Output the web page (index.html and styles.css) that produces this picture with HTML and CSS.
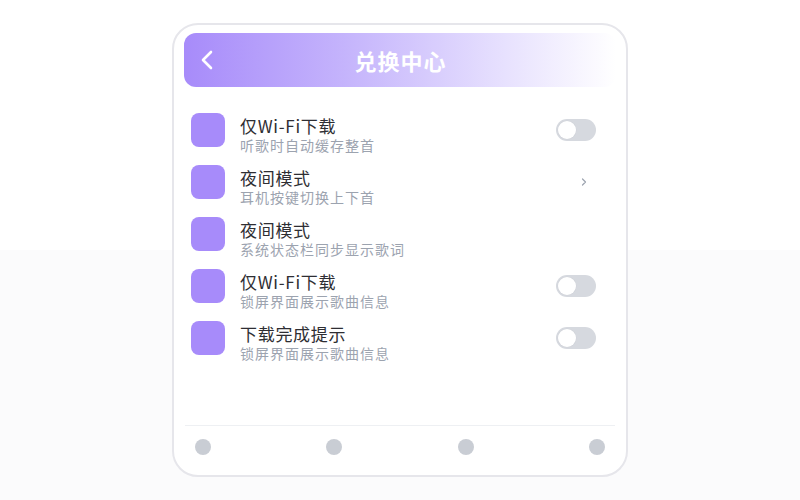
FILE: index.html
```html
<!DOCTYPE html>
<html lang="zh-CN">
<head>
<meta charset="utf-8">
<title>兑换中心</title>
<link rel="stylesheet" href="styles.css">
</head>
<body>
<div class="card">
  <header class="header">
    <span class="back">
      <svg width="24" height="24" viewBox="0 0 24 24"><path d="M15 4 L7 12 L15 20" fill="none" stroke="#fff" stroke-width="2.6" stroke-linecap="round" stroke-linejoin="round"/></svg>
    </span>
    <h1 class="title">兑换中心</h1>
    <span></span>
  </header>
  <ul class="list">
    <li class="row">
      <span class="icon"></span>
      <div class="text"><div class="t">仅Wi-Fi下载</div><div class="s">听歌时自动缓存整首</div></div>
      <span class="toggle"><span class="knob"></span></span>
    </li>
    <li class="row">
      <span class="icon"></span>
      <div class="text"><div class="t">夜间模式</div><div class="s">耳机按键切换上下首</div></div>
      <span class="chev"><svg width="6" height="8" viewBox="0 0 6 8"><path d="M1.5 1 L4.5 4 L1.5 7" fill="none" stroke="#9ca3af" stroke-width="1.2" stroke-linecap="round" stroke-linejoin="round"/></svg></span>
    </li>
    <li class="row">
      <span class="icon"></span>
      <div class="text"><div class="t">夜间模式</div><div class="s">系统状态栏同步显示歌词</div></div>
    </li>
    <li class="row">
      <span class="icon"></span>
      <div class="text"><div class="t">仅Wi-Fi下载</div><div class="s">锁屏界面展示歌曲信息</div></div>
      <span class="toggle"><span class="knob"></span></span>
    </li>
    <li class="row">
      <span class="icon"></span>
      <div class="text"><div class="t">下载完成提示</div><div class="s">锁屏界面展示歌曲信息</div></div>
      <span class="toggle"><span class="knob"></span></span>
    </li>
  </ul>
  <nav class="nav">
    <span class="dot"></span><span class="dot"></span><span class="dot"></span><span class="dot"></span>
  </nav>
</div>
</body>
</html>
```
FILE: styles.css
```css
* { box-sizing: border-box; }
html, body { margin: 0; padding: 0; }
body {
  width: 800px;
  height: 500px;
  background: linear-gradient(to bottom, #ffffff 0, #ffffff 50%, #fbfbfc 50%, #fbfbfc 100%);
  font-family: "Noto Sans CJK SC", "Noto Sans", sans-serif;
  padding-top: 23px;
}
.card {
  width: 456px;
  height: 454px;
  margin-left: 172px;
  border: 2px solid #e6e6eb;
  border-radius: 26px;
  background: #fff;
  padding: 8px 10px 0;
  display: flex;
  flex-direction: column;
}
.header {
  height: 54px;
  border-radius: 12px;
  background: linear-gradient(to right, #a78bfa 0%, #c7b7fc 40%, #e8e2fe 75%, #ffffff 100%);
  display: grid;
  grid-template-columns: 1fr auto 1fr;
  align-items: center;
  padding: 0 12px;
}
.back { display: flex; align-items: center; }
.title {
  margin: 0;
  font-size: 22px;
  font-weight: 700;
  color: #fff;
  line-height: 30px;
  letter-spacing: 1px;
  padding-left: 1px;
}
.list {
  list-style: none;
  margin: 0;
  padding: 26px 20px 0 7px;
  flex: 1;
}
.row {
  height: 52px;
  display: flex;
  align-items: flex-start;
}
.icon {
  width: 34px;
  height: 34px;
  border-radius: 8px;
  background: #a78bfa;
  flex: none;
}
.text {
  flex: 1;
  margin-left: 15px;
  padding-top: 1px;
}
.t {
  font-size: 17px;
  line-height: 23px;
  letter-spacing: 0.7px;
  color: #2e2e33;
}
.s {
  font-size: 14px;
  line-height: 17px;
  letter-spacing: 1px;
  color: #9ca3af;
}
.toggle {
  margin-top: 6px;
  width: 40px;
  height: 22px;
  border-radius: 11px;
  background: #d6d9df;
  padding: 2px;
  display: flex;
}
.knob {
  width: 18px;
  height: 18px;
  border-radius: 50%;
  background: #fff;
  box-shadow: 0 0 0 0.5px #d0d3d9;
}
.chev {
  margin-top: 13px;
  margin-right: 9px;
  display: flex;
}
.nav {
  border-top: 1px solid #eef0f3;
  margin: 0 1px;
  padding: 13px 10px 20px;
  display: flex;
  justify-content: space-between;
}
.dot {
  width: 16px;
  height: 16px;
  border-radius: 50%;
  background: #c9cdd4;
}
```
